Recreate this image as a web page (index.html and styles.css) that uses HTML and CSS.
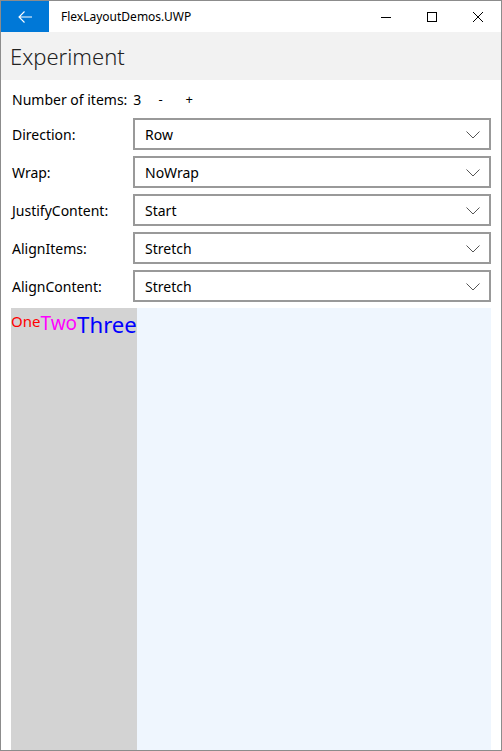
FILE: index.html
```html
<!DOCTYPE html>
<html>
<head>
<meta charset="utf-8">
<link rel="stylesheet" href="styles.css">
</head>
<body>
<div class="window">
  <div class="titlebar">
    <div class="back">
      <svg width="16" height="16" viewBox="0 0 16 16"><path d="M15 8H2M7.5 2.5L2 8l5.5 5.5" fill="none" stroke="#fff" stroke-width="1.1"/></svg>
    </div>
    <div class="title">FlexLayoutDemos.UWP</div>
    <div class="caps">
      <div class="cap"><svg width="10" height="10" viewBox="0 0 10 10"><path d="M0 5.5H10" stroke="#000" stroke-width="1"/></svg></div>
      <div class="cap"><svg width="10" height="10" viewBox="0 0 10 10"><rect x="0.5" y="0.5" width="9" height="9" fill="none" stroke="#000" stroke-width="1"/></svg></div>
      <div class="cap"><svg width="10" height="10" viewBox="0 0 10 10"><path d="M0 0L10 10M10 0L0 10" stroke="#000" stroke-width="1"/></svg></div>
    </div>
  </div>
  <div class="header">Experiment</div>
  <div class="content">
    <div class="count">
      <span>Number of items:</span><span>3</span><span class="btn">-</span><span class="btn">+</span>
    </div>
    <div class="form">
      <div class="label">Direction:</div><div class="combo"><span>Row</span><svg class="chev" width="14" height="8" viewBox="0 0 14 8"><path d="M0.5 0.5L7 7L13.5 0.5" fill="none" stroke="#555" stroke-width="1"/></svg></div>
      <div class="label">Wrap:</div><div class="combo"><span>NoWrap</span><svg class="chev" width="14" height="8" viewBox="0 0 14 8"><path d="M0.5 0.5L7 7L13.5 0.5" fill="none" stroke="#555" stroke-width="1"/></svg></div>
      <div class="label">JustifyContent:</div><div class="combo"><span>Start</span><svg class="chev" width="14" height="8" viewBox="0 0 14 8"><path d="M0.5 0.5L7 7L13.5 0.5" fill="none" stroke="#555" stroke-width="1"/></svg></div>
      <div class="label">AlignItems:</div><div class="combo"><span>Stretch</span><svg class="chev" width="14" height="8" viewBox="0 0 14 8"><path d="M0.5 0.5L7 7L13.5 0.5" fill="none" stroke="#555" stroke-width="1"/></svg></div>
      <div class="label">AlignContent:</div><div class="combo"><span>Stretch</span><svg class="chev" width="14" height="8" viewBox="0 0 14 8"><path d="M0.5 0.5L7 7L13.5 0.5" fill="none" stroke="#555" stroke-width="1"/></svg></div>
    </div>
    <div class="preview">
      <div class="items">
        <span class="one">One</span><span class="two">Two</span><span class="three">Three</span>
      </div>
    </div>
  </div>
</div>
</body>
</html>
```
FILE: styles.css
```css
* { box-sizing: border-box; }
html, body { margin: 0; padding: 0; }
body { font-family: "Noto Sans", "Open Sans", sans-serif; color: #000; background: #fff; }
.window {
  width: 502px; height: 751px;
  border: 1px solid #8c8c8c;
  display: flex; flex-direction: column;
  overflow: hidden;
}
.titlebar { height: 31px; display: flex; align-items: center; background: #fff; }
.back { width: 48px; height: 31px; background: #0078d7; display: flex; align-items: center; justify-content: center; }
.title { font-size: 12px; margin-left: 12px; flex: 1; }
.caps { display: flex; height: 31px; }
.cap { width: 46px; display: flex; align-items: center; justify-content: center; }
.header { height: 48px; background: #f2f2f2; font-size: 22px; font-weight: 300; color: #222; padding-left: 9px; display: flex; align-items: center; }
.content { flex: 1; padding: 0 10px 0 10px; display: flex; flex-direction: column; }
.count { height: 38px; display: flex; align-items: center; font-size: 14px; padding-left: 1px; gap: 6px; }
.count .btn { padding: 0 6px 0 11px; font-size: 13px; }
.form { display: grid; grid-template-columns: 122px 1fr; row-gap: 6px; align-items: center; }
.label { font-size: 14px; padding-left: 1px; }
.combo { height: 32px; border: 2px solid #999; display: flex; align-items: center; justify-content: space-between; padding: 0 9px 0 10px; font-size: 14px; }
.chev { margin-top: 1px; }
.preview { margin-top: 6px; flex: 1; background: #eff6fe; display: flex; }
.items { background: #d3d3d3; display: flex; align-items: flex-start; }
.items span { line-height: 1; padding-top: 6px; }
.one { color: #ff0000; font-size: 15px; }
.two { color: #ff00ff; font-size: 19px; }
.three { color: #0000ff; font-size: 22.2px; }
```
